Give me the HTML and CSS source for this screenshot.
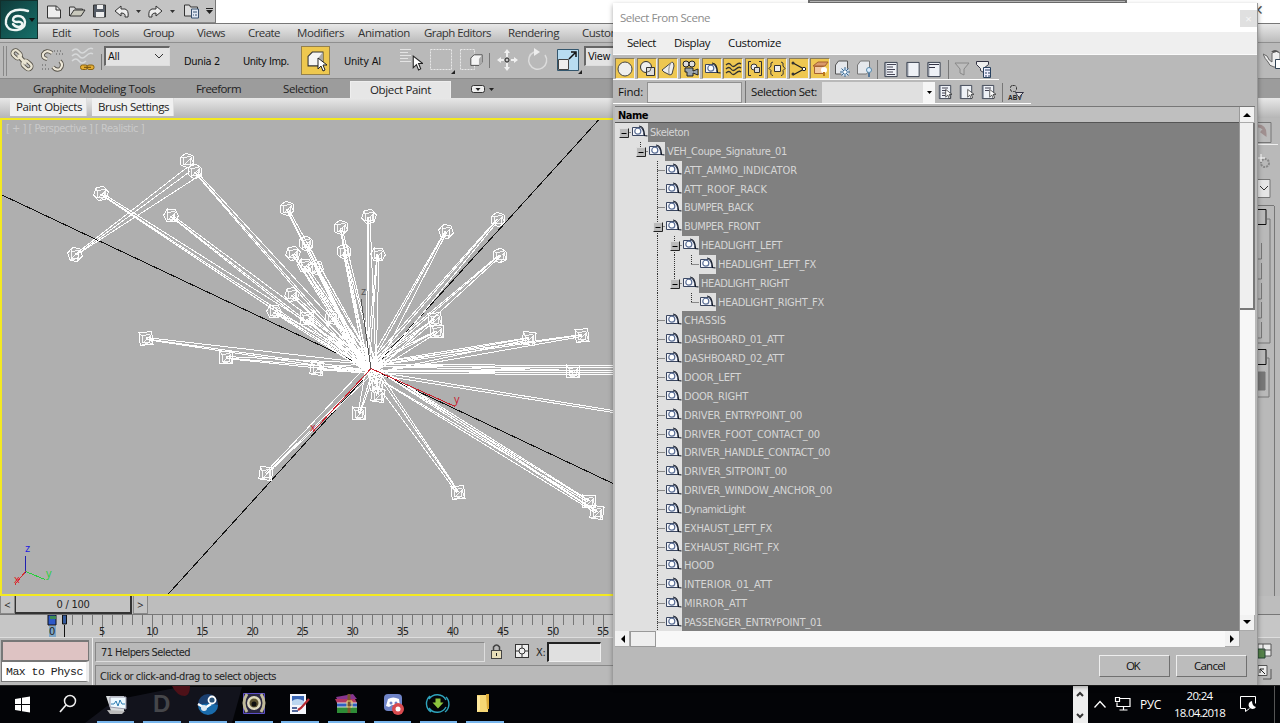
FILE: index.html
```html
<!DOCTYPE html>
<html lang="en">
<head>
<meta charset="utf-8">
<title>Select From Scene</title>
<link rel="stylesheet" href="styles.css">
</head>
<body>
<svg class="defs" width="0" height="0">
  <symbol id="tape" viewBox="0 0 17 14"><path d="M1.500 2.500h8q3 1 3.500 8H1.500z" fill="#f4f5fa" stroke="#3a4660"/><circle cx="6.800" cy="6.200" r="3" fill="#fff" stroke="#5b6f96" stroke-width="1.200"/><path d="M8 1q5 0 5.500 9.500l3 .5" fill="none" stroke="#111827" stroke-width="1.200"/></symbol>
  <symbol id="cursor" viewBox="0 0 10 15"><path d="M1 1v11l3-3 2 5 2-1-2-5h4z" fill="#fff" stroke="#222"/></symbol>
  <symbol id="cube" viewBox="0 0 16 16"><path d="M1 5l4-4h10v9l-4 4H1z" fill="#f5f5f5" stroke="#333"/><path d="M11 14V6l4-5v9z" fill="#aaa"/></symbol>
  <symbol id="page" viewBox="0 0 16 18"><path d="M1.500 1.500h13v15H1.500z" fill="#eef1f6" stroke="#333b4a"/><path d="M2.500 2v14" stroke="#6a7382"/></symbol>
</svg>

<div class="app">
  <div class="titlebar">
    <div class="quick">
      <svg width="177" height="23" fill="none" stroke="#333">
        <path d="M9.500 6h9l4 4v8h-13z" fill="#eee"/><path d="M18 6v4h4"/>
        <path d="M31.500 16v-9h5l1 2h7v2" fill="#ddd"/><path d="M32 16l4-6h11l-4 6z" fill="#c9c9bd"/>
        <path d="M55.500 5h12v12h-12z" fill="#555c66"/><path d="M59 5h6v4h-6zM58 12h8v5h-8z" fill="#eee" stroke="none"/>
        <path d="M77 11l6-5v3h4q4 1 3 8h-3q1-4-4-4v3z" fill="#eee"/>
        <path d="M124 11l-6-5v3h-4q-4 1-3 8h3q-1-4 4-4v3z" fill="#eee"/>
        <path d="M98 10h5l-2.500 3zM132 10h5l-2.500 3z" fill="#333" stroke="none"/>
        <path d="M146.500 5h5l1 2h7v9h-13z" fill="#ddd"/><path d="M153.500 9h7v9h-7z" fill="#dfe7f3" stroke="#37506f"/><path d="M155 12h4m-4 3h1m1 0h2" stroke="#37506f"/>
        <path d="M168 8h7v1h-7z" fill="#222" stroke="none"/><path d="M168 10h7l-3.500 4z" fill="#222" stroke="none"/>
      </svg>
    </div>
    <div class="hidden-window"></div>
    <span class="behind-close">✕</span>
  </div>
  <div class="logo">
    <svg width="37" height="38" viewBox="0 0 37 38" fill="none" stroke="#eef5f3">
      <path d="M27 10q-10-3-17 1-6 5-5 12 2 7 11 6 8-1 8-8-1-6-7-6-5 0-5 4 1 2 4 2 3-1 5 1 1 3-3 4-4 0-6-3" stroke-width="2.400" stroke-linecap="round"/>
      <path d="M28 17h6l-3 4z" fill="#111" stroke="none"/>
    </svg>
  </div>
  <div class="menubar">
    <span data-w="19">Edit</span><span data-w="26">Tools</span><span data-w="31">Group</span><span data-w="28">Views</span><span data-w="32">Create</span><span data-w="47">Modifiers</span><span data-w="52">Animation</span><span data-w="67">Graph Editors</span><span data-w="51">Rendering</span><span class="cut" data-w="52">Customize</span>
  </div>
  <div class="toolbar">
    <svg class="tools" width="102" height="36" fill="none">
      <path d="M3.500 3v30M6.500 3v30" stroke="#888"/>
      <g stroke="#57534a" stroke-width="4"><rect x="12.500" y="8.500" width="9" height="6" rx="3" transform="rotate(42 17 11)"/><rect x="22" y="19" width="10" height="6" rx="3" transform="rotate(42 27 22)"/></g><path d="M18 12l8 9" stroke="#57534a" stroke-width="5"/>
      <g stroke="#e9e4d2" stroke-width="2.200"><rect x="12.500" y="8.500" width="9" height="6" rx="3" transform="rotate(42 17 11)"/><rect x="22" y="19" width="10" height="6" rx="3" transform="rotate(42 27 22)"/></g><path d="M18 12l8 9" stroke="#e9e4d2" stroke-width="3"/>
      <g stroke="#57534a" stroke-width="4"><path d="M52 10q-6-4-9 1-1 4 4 5M60 18q4 4 0 8-4 2-7-2"/></g>
      <g stroke="#eee8d8" stroke-width="2.200"><path d="M52 10q-6-4-9 1-1 4 4 5M60 18q4 4 0 8-4 2-7-2"/></g>
      <path d="M54 8h8M56 11h7M42 22h6M42 26h8" stroke="#555" stroke-dasharray="1 2"/>
      <path d="M72 8q4-4 7 0t7 0 7-2M72 13q4-4 7 0t7 0 7-2M72 18q4-4 7 0t7 0" stroke="#d7d9da" stroke-width="1.500"/>
      <rect x="80.500" y="22" width="7" height="4.500" rx="2" fill="#e5ae32" stroke="#8a6211"/><rect x="87" y="22" width="7" height="4.500" rx="2" fill="#e5ae32" stroke="#8a6211"/><path d="M84 24.300h7" stroke="#6b4a0b"/>
      <path d="M101.500 11v16" stroke="#777"/>
    </svg>
    <div class="combo">All<svg width="10" height="6"><path d="M1 1l4 4 4-4" fill="none" stroke="#333"/></svg></div>
    <span class="tb-label dunia" data-w="36">Dunia 2</span>
    <span class="tb-label imp" data-w="46">Unity Imp.</span>
    <div class="active-tool"><svg width="20" height="22"><use href="#cube" width="17" height="17" y="1"/><use href="#cursor" x="10" y="7" width="10" height="15"/></svg></div>
    <span class="tb-label ai" data-w="37">Unity AI</span>
    <svg class="tools" width="184" height="36" fill="none">
      <path d="M1 6.500h11M1 9.500h8M1 12.500h11M1 15.500h8M1 18.500h11" stroke="#e4e4e4"/><use href="#cursor" x="13" y="12" width="11" height="16"/>
      <path d="M31.500 6.500h21v20h-21z" stroke="#e8e8e8" stroke-dasharray="2 1"/><path d="M56 27v4h-4z" fill="#222"/>
      <path d="M61.500 6.500h14v20h-14z" stroke="#e8e8e8" stroke-dasharray="2 1"/><use href="#cube" x="71" y="11" width="13" height="13"/>
      <path d="M90.500 10v15" stroke="#777"/>
      <g transform="translate(1 0)"><g fill="#f0f0f0"><path d="M107 6l3 4h-2v4h-2v-4h-2zM107 28l3-4h-2v-4h-2v4h-2zM97 17l4-3v2h3v2h-3v2zM118 17l-4-3v2h-3v2h3v2z"/><circle cx="107" cy="17" r="2" fill="#ccc" stroke="#222"/></g>
      <path d="M132 9a9 9 0 1 0 11 3" transform="translate(2 0)" stroke="#dcdcdc" stroke-width="1.500"/><path d="M134 5l6 4-6 4z" fill="#eee"/>
      <path d="M157.500 6.500h21v21h-21z" fill="#b8dcf1" stroke="#33566d"/><path d="M158.500 16.500h10v10h-10z" fill="#eee" stroke="#444"/><path d="M169 16l6-6m-4-1h5v5" stroke="#111" stroke-width="1.500"/><path d="M182 27v4h-4z" fill="#222"/></g>
    </svg>
    <div class="combo view">View</div>
    <svg class="teapot" width="17" height="36" fill="none"><path d="M0 11l4 2q2 5 5 6V10q5-3 8 0v14h-6q-5-1-6-5-3-3-5-8z" fill="#eee" stroke="#666"/><path d="M8 9q4-4 8 0" fill="#555"/><path d="M12.500 16.500h5v9h-5z" fill="#fff" stroke="#345"/></svg>
  </div>
  <div class="ribbon-tabs">
    <span class="rt1" data-w="122">Graphite Modeling Tools</span><span class="rt2" data-w="45">Freeform</span><span class="rt3" data-w="45">Selection</span><span class="paint"><b data-w="61">Object Paint</b></span>
    <svg width="24" height="12"><rect x=".5" y="2.500" width="13" height="7" rx="2" fill="#eee" stroke="#333"/><path d="M4.500 5h5l-2.500 3zM18 5h5l-2.500 3z" fill="#222"/></svg>
  </div>
  <div class="ribbon-panel"><span><b data-w="66">Paint Objects</b></span><span><b data-w="71">Brush Settings</b></span></div>
  <div class="workspace">
    <div class="viewport">
      <svg id="scene" width="1256" height="476" viewBox="2 120 1256 475"></svg>
      <span class="vp-label" data-w="138">[ + ] [ Perspective ] [ Realistic ]</span>
    </div>
    <div class="command-panel">
      <svg width="22" height="478" fill="none" stroke="#777">
        <path d="M0 4.500h13v20h-13" fill="#bbb"/><path d="M0 8q7 0 7 8l-4-3" stroke="#a09090" stroke-width="3"/><path d="M0 26.500h20" stroke="#eee"/>
        <circle cx="7" cy="45" r="4" stroke="#888" stroke-dasharray="2 1" stroke-width="2"/><path d="M3 36v8M0 40h7" stroke="#fff"/>
        <path d="M0 61.500h12v18h-12" fill="#e5e5e5"/><path d="M2 68l4 4 4-4" stroke="#333"/>
        <path d="M0 87.500h16M9 101h3v124H0"/><path d="M0 91.500h8v15H0M0 231.500h8v15H0" stroke="#111"/>
        <path d="M3.500 125v16H0M3.500 145v16H0M3.500 165v16H0M3.500 184v16H0M3.500 204v16H0"/><path d="M9 240h2v39H0"/><path d="M0 254h7v18H0z" fill="#777"/>
        <path d="M16.500 88v390"/>
      </svg>
    </div>
  </div>
  <div class="timeslider"><button>&lt;</button><div class="frame" ><span data-w="33">0 / 100</span></div><button>&gt;</button></div>
  <svg class="ruler" id="ruler" width="1280" height="24"></svg>
  <div class="status">
    <div class="listener"><div class="pink"></div><div class="script">Max to Physc</div></div>
    <div class="messages">
      <div class="msg-row"><div class="msg"><span data-w="89">71 Helpers Selected</span></div>
        <svg width="62" height="20" fill="none"><rect x="6.500" y="8.500" width="10" height="8" fill="#e8dfba" stroke="#444"/><path d="M8.500 8v-3q3-4 6 0v3" stroke="#444" stroke-width="1.500"/><path d="M11.500 11v3" stroke="#222"/><rect x="30.500" y="2.500" width="13" height="13" fill="#eee" stroke="#333"/><circle cx="37" cy="9" r="3" stroke="#333"/><path d="M31 9h3m6 0h3M37 3v3m0 6v3" stroke="#333"/></svg>
        <span class="xlabel">X:</span><div class="xfield"></div></div>
      <div class="prompt"><span data-w="176">Click or click-and-drag to select objects</span></div>
    </div>
    <svg class="nav" width="22" height="46"><path d="M0 6h13v12h-13z" fill="#eee" stroke="#555"/><path d="M0 11h7v9H0z" fill="#56824a" stroke="#243"/><path d="M5 6v5m0 1h8" stroke="#555"/><path d="M0 27.500h9v10h-9z" fill="#eee" stroke="#555"/><path d="M7 36l-5-5m0 4v-4h4" fill="none" stroke="#222"/><path d="M13 31v10H5" fill="none" stroke="#555"/></svg>
  </div>
  <div class="taskbar">
    <svg class="task-icons" width="520" height="37">
      <path d="M85 37L115 14l65-13h62l-10 36z" fill="#12131c"/><path d="M172 0h18q0 9-5 10-8 0-13-10" fill="#4d1118"/>
      <path d="M15 13l6-1v6h-6zM22 11.800l8-1.300V18h-8zM15 19h6v6l-6-1zM22 19h8v7.500l-8-1.300z" fill="#fff"/>
      <circle cx="70" cy="15" r="5.500" fill="none" stroke="#eee" stroke-width="1.500"/><path d="M66 19l-6 7" stroke="#eee" stroke-width="1.700"/>
      <path d="M106 10h18v15h-13z" fill="#d8dcdd"/><path d="M110 11h16v12l-16-2z" fill="#eef9ff" stroke="#99a"/><path d="M111 18h3l2-3 2 5 2-6 2 4h3" fill="none" stroke="#2b7bb0"/><path d="M107 24l18 1-3 3h-12z" fill="#bbb"/>
      <text x="153" y="26" class="task-d">D</text>
      <circle cx="208" cy="18" r="10" fill="#1b3f70"/><path d="M198 19a10 10 0 0 0 20 0q-10-3-20 0" fill="#1a6bab"/><circle cx="212" cy="14" r="3.500" fill="#29537a" stroke="#fff" stroke-width="1.800"/><path d="M198 18l7 4 6-4" stroke="#fff" stroke-width="2.500" fill="none"/><circle cx="204" cy="22" r="3" fill="#dfe9f2"/>
      <path d="M243.500 7.500h21v20h-21z" fill="#2a2740" stroke="#5c4ec7"/><path d="M247 8q-6 9 0 18M261 8q6 9 0 18" stroke="#bfb999" stroke-width="3" fill="none"/><circle cx="254" cy="17" r="7" fill="#ded9bc"/><circle cx="254" cy="17" r="4.500" fill="#59502e"/><circle cx="254" cy="18" r="2.500" fill="#101010"/>
      <path d="M290 8h16v20h-16z" fill="#f4f6fb"/><path d="M292 10h12v9h-12z" fill="#3a66b5"/><path d="M292 15q5-4 12 0v4h-12z" fill="#bcd6ef"/><path d="M292 22h5m-5 3h6" stroke="#1c397b" stroke-width="1.500"/><path d="M309 13l-8 9-3 2" stroke="#b72b32" stroke-width="2.200"/>
      <path d="M336 11l17-3 4 5h-20z" fill="#87368f"/><path d="M335 13h20l2 4h-20z" fill="#b23861"/><path d="M337 17h20v4h-20z" fill="#3160c0"/><path d="M337 21h20v6h-20z" fill="#2e8c36"/><path d="M337 17h20m-20 4h20" stroke="#ddd"/><path d="M349 8v19" stroke="#7b542e" stroke-width="3"/><path d="M347 15h5v6h-5z" fill="none" stroke="#ead36f"/>
      <rect x="384" y="8" width="18" height="17" rx="4" fill="#6f84c7"/><path d="M388 13q5-3 11 0l1 7-4 1-2-2h-2l-3 2-3-1z" fill="#fff"/><circle cx="391" cy="17" r="1.500" fill="#6f84c7"/><circle cx="396" cy="17" r="1.500" fill="#6f84c7"/><circle cx="398" cy="23" r="6" fill="#d94b4f"/><circle cx="398" cy="23" r="2.500" fill="#fff"/>
      <path d="M429 13a10 10 0 0 1 17 1M446 21a10 10 0 0 1-17 1M430 10a10 10 0 0 0 1 16M445 26a10 10 0 0 0 1-15" stroke="#2fa4bd" stroke-width="1.400" fill="none"/><path d="M435.500 12.500h5v4h3l-5.500 6-5.500-6h3z" fill="#8cc33e"/>
      <path d="M477 9h11v17h-11z" fill="#f6d774"/><path d="M486 8h3v15h-2z" fill="#dba937"/><path d="M477 26l3-2V10h-3z" fill="#ffe99d"/>
      <g fill="#78b6ed"><path d="M97 35h37v2H97zM143 35h38v2h-38zM189 35h38v2h-38zM235 35h38v2h-38zM281 35h38v2h-38zM328 35h37v2h-37zM374 35h37v2h-37zM420 35h37v2h-37zM466 35h38v2h-38z"/></g>
    </svg>
    <div class="tray">
      <svg width="118" height="37" fill="none" stroke="#fff"><path d="M1 0h15v37H1z" fill="#eee" stroke="none"/><path d="M5 10l3-3 3 3M5 28l3 3 3-3" stroke="#333" stroke-width="2"/><path d="M22.500 21.500l5.500-6 5.500 6" stroke-width="1.300"/><path d="M48 12.500h10v8H45v-4M43.500 11.500h4v4h-4zM51.500 21v3m-4 0h8" stroke-width="1.200"/></svg>
      <span class="lang">РУС</span>
      <span class="clock"><b data-w="26">20:24</b><b data-w="51">18.04.2018</b></span>
      <svg class="notice" width="48" height="37" fill="none" stroke="#fff"><path d="M9.500 10.500h15v7M9.500 10.500v12h5v3l4-3"/><path d="M21 15a4 4 0 1 0 4 6q-4-1-4-6" fill="#fff" stroke="none"/><path d="M43.500 0v37" stroke="#555"/></svg>
    </div>
  </div>
</div>

<div class="dialog">
  <div class="dlg-title"><span data-w="90">Select From Scene</span><i>×</i></div>
  <div class="dlg-menu"><span data-w="29">Select</span><span data-w="36">Display</span><span data-w="53">Customize</span></div>
  <div class="dlg-tools">
    <div class="filters" id="filters"></div>
    <svg width="120" height="24" fill="none">
      <path d="M4.500 8l3-4h9v9l-3 4h-9z" fill="#e5e8ec" stroke="#555"/><circle cx="14" cy="15" r="4" fill="#cfe2f4"/><path d="M14 10v10M9 15h10M10.500 11.500l7 7m0-7l-7 7" stroke="#38668e"/><circle cx="14" cy="15" r="1.500" fill="#fff"/>
      <path d="M26.500 8l3-4h9v9l-3 4h-9z" fill="#e5e8ec" stroke="#777"/><circle cx="38" cy="13" r="2.500" fill="#def" stroke="#58a"/><path d="M38 16v4" stroke="#579" stroke-width="2"/>
      <path d="M46.500 3v19M117.500 3v19" stroke="#777"/>
      <use href="#page" x="52" y="4" width="16" height="17"/><path d="M56 7.500h9m-9 2.500h6m-6 2.500h8m-8 2.500h6m-6 2.500h8" stroke="#445"/>
      <use href="#page" x="74" y="4" width="16" height="17"/><use href="#page" x="95" y="4" width="16" height="17"/><path d="M98 7.500h10M98 10.500h6" stroke="#334"/>
    </svg>
    <svg width="48" height="24" fill="none"><path d="M4 6h14l-5 6v6l-4-2v-4z" fill="#bdbdbd" stroke="#888"/><path d="M25.500 4.500h12v3l-5 4v4l-3-2v-2l-4-4z" fill="#eee" stroke="#334"/><path d="M32.500 10.500h7v10h-7z" fill="#eef" stroke="#28415f"/><path d="M34 13h5m-5 3h2m1 0h2m-5 3h2m1 0h2" stroke="#28415f"/></svg>
  </div>
  <div class="dlg-find">
    <span class="find-label" data-w="25">Find:</span><div class="find-field"></div><span class="set-label" data-w="66">Selection Set:</span><div class="set-field"><svg width="5" height="4"><path d="M0 0h5l-2.500 3z"/></svg></div>
    <svg width="90" height="22" fill="none"><use href="#page" x="2" y="3" width="14" height="16"/><path d="M6 7h6m-6 2.500h4m-4 2.500h4m-4 2.500h3" stroke="#445"/><use href="#cursor" x="9" y="7" width="7" height="12"/><use href="#page" x="23" y="3" width="14" height="16"/><use href="#cursor" x="31" y="7" width="7" height="12"/><use href="#page" x="45" y="3" width="14" height="16"/><path d="M49 7h6m-6 2.500h4" stroke="#445"/><use href="#cursor" x="53" y="7" width="7" height="12"/><path d="M66.500 2v19" stroke="#777"/><rect x="74.500" y="4.500" width="6" height="6" rx="2" stroke="#333" stroke-dasharray="3 1"/><text x="72" y="19" class="abv">ABV</text><path d="M79.500 11.500h8l-3 3-1 2-2-2z" fill="#ddd" stroke="#334"/></svg>
  </div>
  <div class="dlg-list">
    <div class="tree-col"><div class="head"><b data-w="30">Name</b></div><div class="tree" id="tree"></div></div>
    <div class="vscroll"><div class="sb"><svg width="8" height="5"><path d="M0 5l4-4 4 4z"/></svg></div><div class="thumb"></div><div class="sb last"><svg width="8" height="5"><path d="M0 0l4 4 4-4z"/></svg></div></div>
  </div>
  <div class="hscroll"><div class="sb"><svg width="5" height="8"><path d="M5 0l-4 4 4 4z"/></svg></div><div class="hthumb"></div><div class="sb end"><svg width="5" height="8"><path d="M0 0l4 4-4 4z"/></svg></div></div>
  <div class="dlg-buttons"><button><span data-w="13">OK</span></button><button><span data-w="31">Cancel</span></button></div>
</div>
<script src="script.js"></script>
</body>
</html>
```
FILE: styles.css
```css
* { box-sizing: border-box; }
body { margin: 0; width: 1280px; height: 723px; overflow: hidden; font: 11.500px/16px "Open Sans", "Noto Sans", sans-serif; color: #222; background: #fff; }
b { font-weight: inherit; }
svg { display: block; flex: none; }
.defs { position: absolute; }
button { font: inherit; padding: 0; color: inherit; }
span, b { white-space: nowrap; }
.app { position: relative; display: flex; flex-direction: column; height: 723px; background: #b9b9b9; }

.titlebar { display: flex; height: 23px; background: #fff; }
.quick { width: 178px; margin-left: 38px; background: #c4c4c4; border-right: 1px solid #777; border-bottom: 1px solid #8a8a8a; }
.hidden-window { width: 319px; height: 4px; margin-left: 592px; background: #bbb; border: solid #707070; border-width: 1px 2px 2px; }
.behind-close { margin-left: 125px; color: #555; font-size: 14px; line-height: 20px; }
.logo { position: absolute; left: 0; top: 0; width: 38px; height: 39px; border: 1px solid #12302d; background: linear-gradient(135deg, #0f3b3a, #17706a); }
.menubar { display: grid; grid-template-columns: 41px 50px 54px 51px 49px 61px 66px 84px 74px 31px; height: 19px; padding-left: 52px; line-height: 18px; background: linear-gradient(#e8e8e8, #bcbcbc); border-top: 1px solid #777; color: #333; }
.cut { overflow: hidden; }

.toolbar { display: flex; height: 36px; background: #b9b9b9; border-top: 1px solid #8f8f8f; }
.combo { display: flex; justify-content: space-between; width: 66px; height: 20px; margin: 3px 0 0 2px; padding: 0 5px 0 2px; background: #e3e3e3; border: solid #666; border-width: 2px 1px 1px 2px; border-right-color: #ddd; border-bottom-color: #ddd; font: 11px/17px "DejaVu Sans Condensed", "DejaVu Sans", sans-serif; letter-spacing: -.3px; color: #111; }
.combo svg { margin-top: 5px; }
.view { width: 60px; margin-left: 1px; }
.tb-label { line-height: 37px; color: #111; font-family: "DejaVu Sans Condensed", "DejaVu Sans", sans-serif; font-size: 11px; }
.dunia { width: 59px; margin-left: 14px; }
.imp { width: 58px; }
.active-tool { width: 29px; height: 29px; margin-top: 3px; padding: 3px 5px; background: #eec84f; border: 1px solid #94804b; }
.ai { width: 40px; margin: 0 15px 0 14px; }
.teapot { margin-left: auto; }

.ribbon-tabs { display: flex; height: 20px; line-height: 20px; padding-left: 10px; background: #9c9c9c; border-top: 1px solid #8a8a8a; color: #222; }
.rt1 { width: 163px; padding-left: 23px; }
.rt2 { width: 87px; padding-left: 23px; }
.rt3 { width: 90px; padding-left: 23px; }
.paint { width: 101px; margin-top: 2px; line-height: 15px; padding-left: 19px; background: #e6e6e6; border: solid #eee; border-width: 1px 1px 0; }
.ribbon-tabs svg { margin: 4px 0 0 20px; }
.ribbon-panel { display: flex; gap: 5px; height: 20px; padding-left: 10px; line-height: 18px; background: linear-gradient(#e8e8e8, #b6b6b6); }
.ribbon-panel span { padding: 0 4px 0 6px; background: #f0f0f0; border-right: 1px solid #ddd; height: 18px; }
.workspace { display: flex; height: 478px; }
.viewport { position: relative; width: 1258px; border: 2px solid #f3e921; background: #afafaf; overflow: hidden; }
.vp-label { position: absolute; left: 4px; top: 2px; font: 11px/14px "DejaVu Sans Condensed", sans-serif; color: #cacaca; }
#scene text { font: 11px "Open Sans", sans-serif; }
.command-panel { width: 22px; background: #b9b9b9; }

.timeslider { display: flex; height: 18px; background: #bdbdbd; }
.timeslider button { width: 15px; border: 1px solid #888; border-width: 0 1px 1px; background: #c4c4c4; line-height: 16px; font-size: 11px; }
.frame { width: 117px; text-align: center; border: solid #333; border-width: 0 2px 2px 1px; background: #c2c2c2; margin-right: 1px; font: 11px/17px "DejaVu Sans Condensed", sans-serif; }
.ruler { background: #c6c6c6; border-top: 1px solid #777; border-bottom: 1px solid #ddd; }
.ruler text { font: 11px "DejaVu Sans Condensed", sans-serif; letter-spacing: -.3px; fill: #222; text-anchor: middle; }
.status { display: flex; height: 47px; background: #b9b9b9; font: 11px/17px "DejaVu Sans Condensed", sans-serif; }
.listener { width: 88px; margin: 2px 0 0 1px; }
.pink { height: 21px; background: #dec3c3; border: 1px solid #777; border-width: 2px 1px 1px 2px; }
.script { height: 21px; padding: 2px 4px; overflow: hidden; white-space: nowrap; background: #fff; font: 11.500px/16px "Liberation Mono", monospace; border: 1px solid #777; border-right: 3px solid #eee; letter-spacing: -.5px; }
.messages { width: 1169px; margin-left: 3px; border-left: 1px solid #eee; padding: 4px 0 0 2px; }
.msg-row { display: flex; height: 20px; }
.msg { width: 390px; padding: 1px 5px; border: 1px solid #888; border-right-color: #ddd; border-bottom-color: #ddd; }
.xlabel { width: 11px; margin-top: 2px; margin-left: -11px; letter-spacing: -.3px; }
.xfield { width: 54px; height: 20px; background: #e0e0e0; border: solid #eee; border-width: 2px 1px 1px 2px; border-top-color: #222; border-left-color: #222; }
.prompt { height: 21px; margin-top: 3px; padding: 2px 4px; border: solid #888; border-width: 1px 0 0 1px; }

.taskbar { display: flex; justify-content: space-between; height: 38px; border-top: 1px solid #222; background: #030407; color: #fff; }
.task-d { font: bold 24px "Liberation Sans", sans-serif; fill: #45464a; }
.tray { display: flex; width: 208px; }
.tray svg:first-child { width: 68px; }
.lang { width: 28px; line-height: 37px; font-size: 12px; letter-spacing: -.4px; }
.clock { display: flex; flex-direction: column; width: 63px; align-items: center; padding-top: 1px; line-height: 17px; }

.dialog { position: absolute; left: 613px; top: 3px; width: 645px; height: 682px; display: flex; flex-direction: column; background: #b9b9b9; border-right: 1px solid #999; box-shadow: 0 2px 5px rgba(0,0,0,.35); }
.dlg-title { display: flex; justify-content: space-between; height: 29px; padding: 7px 0 0 7px; background: #fff; color: #8c8c8c; }
.dlg-title i { width: 17px; height: 17px; background: #e0e0e0; color: #f6f6f6; text-align: center; font-style: normal; line-height: 17px; }
.dlg-menu { display: grid; grid-template-columns: 47px 54px 80px; height: 23px; padding-left: 14px; line-height: 22px; background: #efefef; border-bottom: 1px solid #fafafa; color: #111; }
.dlg-tools { display: flex; height: 25px; width: 386px; border-bottom: 1px solid #fff; padding: 2px 0 0 2px; margin-bottom: 1px; }
.filters { display: flex; gap: 1.700px; width: 216px; }
.filter { width: 20px; height: 21px; margin-top: 1px; background: #eec751; border: 1px solid #8a7d5b; border-bottom-color: #eee; border-right-color: #eee; }
.dlg-find { display: flex; height: 23px; width: 418px; padding-left: 5px; line-height: 21px; border-bottom: 1px solid #fff; color: #111; }
.dlg-find > * { flex: none; }
.find-label { width: 29px; }
.find-field { width: 95px; height: 21px; margin-top: 1px; background: #e0e0e0; border: 1px solid #909090; }
.set-label { width: 77px; margin-left: 3px; padding-left: 5px; border-left: 1px solid #777; }
.set-field { display: flex; justify-content: flex-end; width: 113px; margin-top: 1px; margin-right: 1px; padding: 9px 3px; background: linear-gradient(90deg, #e0e0e0 101px, #f6f6f6 0); }
.abv { font: bold 6.500px "Liberation Sans", sans-serif; fill: #222; }
.dlg-list { display: flex; height: 525px; margin: 2px 2px 0 2px; border-top: 1px solid #777; }
.tree-col { width: 625px; }
.head { height: 16px; padding-left: 3px; line-height: 17px; background: #bfbfbf; border-bottom: 1px solid #555; font-family: "DejaVu Sans Condensed", sans-serif; font-weight: bold; font-size: 11px; color: #000; }
.tree { height: 508px; overflow: hidden; background: #808080; font: 11px/20px "DejaVu Sans Condensed", sans-serif; color: #d6d6d6; }
.row { display: flex; height: 18.850px; }
.gutter { background: #e0e0e0; display: flex; justify-content: flex-end; margin-right: 2px; }
.vscroll { display: flex; flex-direction: column; width: 16px; background: #f7f7f7; border-left: 1px solid #999; }
.sb { display: flex; align-items: center; justify-content: center; width: 15px; height: 16px; flex: none; background: #f2f2f2; border: 1px solid #aaa; border-width: 0 1px 1px 0; }
.thumb { height: 187px; background: #efefef; border: 1px solid #777; border-width: 0 2px 2px 0; }
.last { margin-top: auto; }
.hscroll { display: flex; height: 16px; width: 625px; margin-left: 2px; background: #f8f8f8; }
.hthumb { width: 26px; border: 1px solid #999; background: #eee; }
.end { margin-left: auto; }
.dlg-buttons { display: flex; justify-content: flex-end; gap: 6px; padding: 8px 10px 0 0; color: #111; }
.dlg-buttons button { width: 71px; height: 22px; padding-right: 4px; background: #bcbcbc; border: 1px solid #707070; border-top-color: #eee; border-left-color: #eee; }
```
FILE: script.js
```js
// Helper nodes of the skeleton, in viewport coordinates
const nodes = [[187,160],[195,171],[101,193],[171,215],[75,254],[287,208],[306,243],[293,253],[305,265],[316,267],[341,227],[344,251],[369,216],[378,254],[446,231],[498,219],[500,255],[292,294],[274,311],[307,318],[332,317],[146,338],[226,357],[317,368],[435,319],[437,331],[529,338],[582,335],[573,371],[378,395],[376,383],[359,413],[266,473],[458,492],[589,501],[597,512]];
const line = (x1, y1, x2, y2, c = '#fff', w = 1) => `<path d="M${x1} ${y1}L${x2} ${y2}" stroke="${c}" stroke-width="${w}"/>`;
const root = [371, 368];
let s = line(2, 194.5, 613, 483, '#111') + line(599, 119, 166, 596, '#111');
nodes.forEach(([x, y], i) => {
  if (i !== 4 && i !== 0) {
    const d = Math.hypot(root[0] - x, root[1] - y), nx = (root[1] - y) / d, ny = (x - root[0]) / d;
    // The bone tapers from a wide base at the root to the helper
    [-5, -2, 5].forEach(k => {
      s += line(x + nx * k / 5, y + ny * k / 5, root[0] + nx * k, root[1] + ny * k);
    });
  }
  const a = (i % 5) * .22 + .4, p = [];
  const n = y > 315 ? 4 : 6, rad = n === 4 ? 9 : 7.5, off = n === 4 ? Math.PI / 4 + (i % 3) * .12 - .1 : a;
  for (let k = 0; k < n; k++) p.push([(x + Math.cos(off + k * 2 * Math.PI / n) * rad).toFixed(1), (y + Math.sin(off + k * 2 * Math.PI / n) * rad).toFixed(1)]);
  s += `<path d="M${p.join('L')}Z" stroke="#fff"/>`;
  const q = [[-4, -3], [4, -4], [3, 4], [-4, 4]].map(([u, v]) => [x + u, y + v]);
  s += `<path d="M${p[0]}L${q[1]}L${q[0]}L${p[n / 2]}M${q[0]}L${q[3]}L${q[1]}L${q[2]}L${q[3]}M${q[2]}L${p[0]}M${p[1]}L${q[2]}" stroke="#fff" stroke-width=".9"/>`;
});
s += line(75, 254, 187, 167) + line(77, 254, 190, 171) + line(77, 254, 198, 176);
[[365,364],[367,366],[370,370],[372,371],[374,373],[410,371],[412,374]].forEach(([b, a]) => s += line(375, a, 613, b));
s += `<circle cx="372" cy="366" r="6" fill="#fff"/>`;
s += line(371, 368, 455, 406, '#c8202c') + line(371, 368, 313, 431, '#c8202c') + line(371, 368, 361, 298, '#555');
s += '<text x="361" y="294" fill="#555">z</text><text x="454" y="402" fill="#c8202c">y</text><text x="310" y="430" fill="#c8202c">x</text>';
s += line(25.500, 572, 25.500, 555, '#2020b0', 1.5) + line(25.500, 571, 45, 579, '#26d03c') + line(25.500, 571, 15, 584, '#d03030');
s += '<text x="25" y="551" fill="#1a1ae0">z</text><text x="46" y="576" fill="#26d03c">y</text><text x="14" y="582" fill="#e02020">x</text>';
document.getElementById('scene').innerHTML = `<g fill="none" shape-rendering="crispEdges">${s}</g>`;

// Track bar
let r = '<path d="M48 0h8v10h-8z" fill="#2d59c8" stroke="#111"/><path d="M50 1h6v3h-6z" fill="#3c8a55"/><rect x="49" y="11" width="7" height="12" fill="#7fa6c6"/><path d="M62.500 0h4v9h-4z" fill="#335a9c" stroke="#111"/><path d="M64.500 10v12" stroke="#111"/>';
for (let i = 2; i <= 56; i++) {
  const x = Math.floor(52 + i * 10.02) + .5;
  r += `<path d="M${x} 0v${i % 5 ? 10 : 22}" stroke="#777"/>`;
}
for (let i = 0; i <= 55; i += 5) r += `<text x="${52 + i * 10.02}" y="20">${i}</text>`;
document.getElementById('ruler').innerHTML = r;

// Display filters
const icons = [
  '<circle cx="9" cy="10" r="7" fill="#eee" stroke="#444"/>',
  '<circle cx="8" cy="8" r="5.500" fill="#eee" stroke="#333"/><path d="M8.500 8.500h8v8h-8z" fill="#ddd" stroke="#333"/><path d="M9 13q4 0 4-4" stroke="#666"/>',
  '<path d="M3 11L13 3q2 0 2 4l-2 8q-2 2-4 0-5-2-6-4z" fill="#eee" stroke="#444"/><path d="M13 3q-4 3-3 12" stroke="#888"/>',
  '<circle cx="5" cy="5" r="3" fill="#ddd" stroke="#222"/><circle cx="11" cy="5" r="3" fill="#ddd" stroke="#222"/><path d="M4 9h8v3l5-2v6l-5-2v3H6v-4H4z" fill="#9aa5b0" stroke="#222"/>',
  '<use href="#tape" x="1" y="3" width="17" height="14"/>',
  '<path d="M2 6q3-3 5 0t5 0 5-1M2 10q3-3 5 0t5 0 5-1M2 14q3-3 5 0t5 0 5-1" stroke="#333" stroke-width="1.300"/>',
  '<path d="M5 2.500H2.500v14H5M13 2.500h2.500v14H13" stroke="#333"/><circle cx="8" cy="8" r="3" fill="#eee" stroke="#333"/><path d="M8.500 8.500h5v5h-5z" fill="#ddd" stroke="#333"/>',
  '<path d="M5 3Q2 3 3 7L1 9.500l2 2q-1 5 2 5M13 3q3 0 2 4l2 2.500-2 2q1 5-2 5" stroke="#333"/><path d="M6.500 6.500h6v6h-6z" fill="#eee" stroke="#333"/>',
  '<path d="M3 4l11 6-11 6" stroke="#222" stroke-width="1.300"/><circle cx="3" cy="4" r="1.500" fill="#333"/><circle cx="14" cy="10" r="1.700" fill="#fff" stroke="#222"/><circle cx="3" cy="15" r="1.500" fill="#333"/>',
  '<path d="M2 7l5-4h10l-3 4z" fill="#d99a6c" stroke="#a56131"/><path d="M3.500 7.500h9v7h-9z" fill="#f0c9a4" stroke="#a56131"/><circle cx="13" cy="11" r="3" fill="#fff"/><path d="M13 13v4" stroke="#bd7818" stroke-width="2"/>'
];
document.getElementById('filters').innerHTML = icons.map(i => `<div class="filter"><svg width="18" height="19" fill="none">${i}</svg></div>`).join('');

// Scene tree: depth, name, label width, has an expander
const rows = [[0,'Skeleton',39,1],[1,'VEH_Coupe_Signature_01',120,1],[2,'ATT_AMMO_INDICATOR',113],[2,'ATT_ROOF_RACK',83],[2,'BUMPER_BACK',69],[2,'BUMPER_FRONT',76,1],[3,'HEADLIGHT_LEFT',81,1],[4,'HEADLIGHT_LEFT_FX',98],[3,'HEADLIGHT_RIGHT',88,1],[4,'HEADLIGHT_RIGHT_FX',106],[2,'CHASSIS',42],[2,'DASHBOARD_01_ATT',100],[2,'DASHBOARD_02_ATT',100],[2,'DOOR_LEFT',57],[2,'DOOR_RIGHT',64],[2,'DRIVER_ENTRYPOINT_00',118],[2,'DRIVER_FOOT_CONTACT_00',136],[2,'DRIVER_HANDLE_CONTACT_00',146],[2,'DRIVER_SITPOINT_00',103],[2,'DRIVER_WINDOW_ANCHOR_00',148],[2,'DynamicLight',61],[2,'EXHAUST_LEFT_FX',88],[2,'EXHAUST_RIGHT_FX',95],[2,'HOOD',30],[2,'INTERIOR_01_ATT',88],[2,'MIRROR_ATT',63],[2,'PASSENGER_ENTRYPOINT_01',138]];
document.getElementById('tree').innerHTML = rows.map(([d, name, w, box], i) => {
  const g = 33 + d * 17, x = 8.5 + d * 17;
  let p = `<path d="M${x} 9.500h8" stroke="#333" stroke-dasharray="1 1"/>`;
  if (d) p += `<path d="M${x} 0v${d === 2 || (d === 3 && i === 6) ? 19 : 10}" stroke="#333" stroke-dasharray="1 1"/>`;
  if (d > 2) p += '<path d="M42.500 0v19" stroke="#333" stroke-dasharray="1 1"/>';
  if (i === 7) p += '<path d="M59.500 0v19" stroke="#333" stroke-dasharray="1 1"/>';
  if (box) p += `<path d="M${x - 4} 5.500h9v9h-9z" fill="#bbb" stroke="#ddd"/><path d="M${x - 4} 14.500h9v-9" stroke="#222" fill="none"/><path d="M${x - 2} 10.500h5" stroke="#000"/>`;
  return `<div class="row"><div class="gutter" style="width:${g}px"><svg width="${g}" height="19">${p}<use href="#tape" x="${g - 17}" y="2" width="17" height="14"/></svg></div><span data-w="${w}">${name}</span></div>`;
}).join('');

// Track each label out to its nominal width
document.querySelectorAll('[data-w]').forEach(el => {
  const range = document.createRange();
  range.selectNodeContents(el);
  el.style.letterSpacing = (el.dataset.w - range.getBoundingClientRect().width) / el.textContent.length + 'px';
});
```
